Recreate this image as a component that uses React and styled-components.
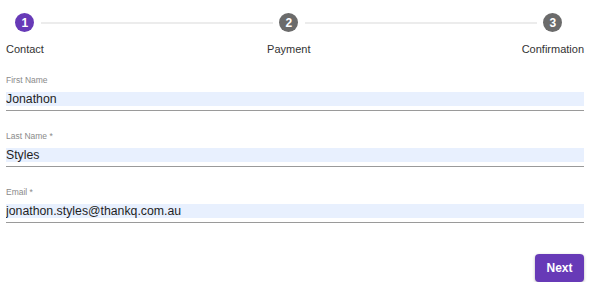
import React from "react";
import styled, { createGlobalStyle } from "styled-components";

const GlobalStyle = createGlobalStyle`
    body {
        margin: 0;
        background: #ffffff;
        font-family: "Liberation Sans", Arial, sans-serif;
    }
`;

const Page = styled.div`
    padding: 13px 18px 0 6px;
`;

// 스테퍼
const Stepper = styled.div`
    display: flex;
    align-items: flex-start;
`;

const Step = styled.div`
    display: flex;
    flex-direction: column;
    align-items: center;
`;

const StepIcon = styled.div`
    width: 19px;
    height: 19px;
    border-radius: 50%;
    background-color: ${(p) => (p.$active ? "#673ab7" : "#6b6b6b")};
    color: #ffffff;
    font-size: 12px;
    font-weight: 700;
    display: flex;
    align-items: center;
    justify-content: center;
`;

const StepLabel = styled.div`
    margin-top: 11px;
    font-size: 11px;
    line-height: 13px;
    color: #333333;
    white-space: nowrap;
`;

const Connector = styled.div`
    flex: 1;
    height: 2px;
    margin-top: 9px;
    background-color: #ececec;
    margin-left: ${(p) => p.$left}px;
    margin-right: ${(p) => p.$right}px;
`;

// 입력 폼
const Form = styled.div`
    display: flex;
    flex-direction: column;
    gap: 20px;
    margin-top: 19px;
`;

const Field = styled.div`
    display: flex;
    flex-direction: column;
`;

const Label = styled.label`
    font-size: 8.5px;
    line-height: 11px;
    color: #8a8a8a;
`;

const InputBox = styled.div`
    margin-top: 6px;
    padding-bottom: 4px;
    border-bottom: 1px solid #9a9a9a;
`;

const Input = styled.input`
    display: block;
    width: 100%;
    box-sizing: border-box;
    height: 14px;
    padding: 0;
    border: none;
    outline: none;
    background-color: #e8f0fe;
    font-family: inherit;
    font-size: 12.3px;
    color: #1f1f1f;
`;

const Actions = styled.div`
    display: flex;
    justify-content: flex-end;
    margin-top: 31px;
`;

const Button = styled.button`
    width: 49px;
    height: 28px;
    border: none;
    border-radius: 4px;
    background-color: #673ab7;
    color: #ffffff;
    font-family: inherit;
    font-size: 12px;
    font-weight: 700;
    box-shadow: 0 1px 3px rgba(0, 0, 0, 0.3);
    cursor: pointer;
`;

const steps = [
    { label: "Contact" },
    { label: "Payment" },
    { label: "Confirmation" },
];

const connectors = [
    { left: -3, right: -6 },
    { left: -6, right: -15 },
];

const fields = [
    { label: "First Name", value: "Jonathon" },
    { label: "Last Name *", value: "Styles" },
    { label: "Email *", value: "jonathon.styles@thankq.com.au" },
];

export default function App() {
    return (
        <>
            <GlobalStyle />
            <Page>
                <Stepper>
                    {steps.map((s, i) => (
                        <React.Fragment key={s.label}>
                            <Step>
                                <StepIcon $active={i === 0}>{i + 1}</StepIcon>
                                <StepLabel>{s.label}</StepLabel>
                            </Step>
                            {i < connectors.length && (
                                <Connector $left={connectors[i].left} $right={connectors[i].right} />
                            )}
                        </React.Fragment>
                    ))}
                </Stepper>
                <Form>
                    {fields.map((f) => (
                        <Field key={f.label}>
                            <Label>{f.label}</Label>
                            <InputBox>
                                <Input defaultValue={f.value} />
                            </InputBox>
                        </Field>
                    ))}
                </Form>
                <Actions>
                    <Button>Next</Button>
                </Actions>
            </Page>
        </>
    );
}
